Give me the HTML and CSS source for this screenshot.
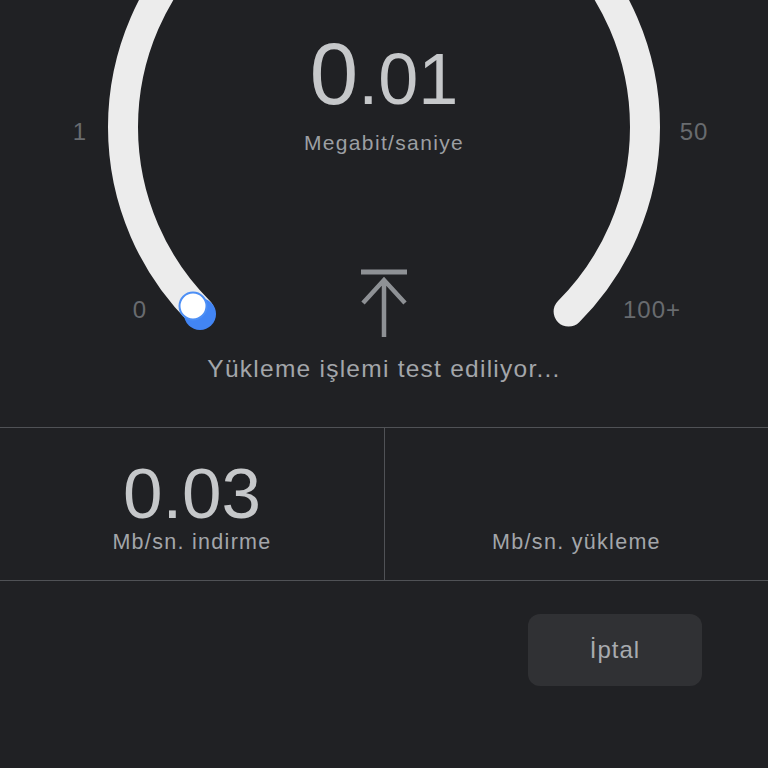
FILE: index.html
```html
<!DOCTYPE html>
<html lang="tr">
<head>
<meta charset="utf-8">
<title>Hız testi</title>
<link rel="stylesheet" href="styles.css">
</head>
<body>
<main class="screen">
  <section class="top">
    <div class="dial">
      <svg class="arc" width="768" height="345" viewBox="0 0 768 345" aria-hidden="true">
        <path d="M 199.4 311.6 A 261 261 0 1 1 568.6 311.6" fill="none" stroke="#ececec" stroke-width="30" stroke-linecap="round"/>
        <circle cx="200" cy="314" r="16" fill="#4285f4"/>
        <circle cx="193" cy="306" r="13.5" fill="#ffffff" stroke="#4d8ff5" stroke-width="2"/>
      </svg>
      <span class="tick tick-1">1</span>
      <span class="tick tick-50">50</span>
      <span class="tick tick-0">0</span>
      <span class="tick tick-100">100+</span>
      <div class="readout"><span class="int">0</span><span class="frac">.01</span></div>
      <div class="unit">Megabit/saniye</div>
      <svg class="upload" width="50" height="72" viewBox="0 0 50 72" aria-hidden="true">
        <path d="M2 6 H48" stroke="#8e9195" stroke-width="5" fill="none"/>
        <path d="M25 71 V14 M4 37 L25 14 L46 37" stroke="#8e9195" stroke-width="4.5" fill="none" stroke-linejoin="miter"/>
      </svg>
    </div>
    <p class="status">Yükleme işlemi test ediliyor...</p>
  </section>
  <section class="stats">
    <div class="cell">
      <div class="value">0.03</div>
      <div class="label">Mb/sn. indirme</div>
    </div>
    <div class="cell">
      <div class="value"></div>
      <div class="label">Mb/sn. yükleme</div>
    </div>
  </section>
  <div class="actions">
    <button class="cancel" type="button">İptal</button>
  </div>
</main>
</body>
</html>
```
FILE: styles.css
```css
html, body {
  margin: 0;
  padding: 0;
  background: #202124;
}
body {
  font-family: "Liberation Sans", Arial, sans-serif;
  width: 768px;
  height: 768px;
  overflow: hidden;
}
.screen {
  display: flex;
  flex-direction: column;
}
.top {
  height: 427px;
  display: flex;
  flex-direction: column;
  align-items: center;
}
.dial {
  position: relative;
  width: 768px;
  height: 340px;
  padding-top: 30px;
  box-sizing: border-box;
  display: flex;
  flex-direction: column;
  align-items: center;
}
.arc {
  position: absolute;
  left: 0;
  top: 0;
}
.tick {
  position: absolute;
  font-size: 24px;
  line-height: 24px;
  letter-spacing: 1px;
  color: #686b6f;
  transform: translateX(-50%);
}
.tick-1 { left: 80px; top: 120px; }
.tick-50 { left: 694px; top: 120px; }
.tick-0 { left: 140px; top: 298px; }
.tick-100 { left: 652px; top: 298px; }
.readout {
  position: relative;
  height: 88px;
  line-height: 88px;
  font-size: 87px;
  color: #c6c8ca;
  white-space: nowrap;
}
.readout .frac {
  font-size: 72px;
}
.unit {
  position: relative;
  margin-top: 13px;
  font-size: 21px;
  line-height: 24px;
  letter-spacing: 1.35px;
  color: #9c9fa3;
}
.upload {
  position: relative;
  margin-top: 111px;
  display: block;
}
.status {
  margin: 14px 0 0;
  font-size: 24.5px;
  line-height: 30px;
  letter-spacing: 1.25px;
  color: #a3a6aa;
}
.stats {
  display: grid;
  grid-template-columns: 1fr 1fr;
  border-top: 1px solid #505256;
  border-bottom: 1px solid #505256;
  height: 154px;
  box-sizing: border-box;
}
.cell {
  padding-top: 33px;
  display: flex;
  flex-direction: column;
  align-items: center;
}
.cell + .cell {
  border-left: 1px solid #505256;
}
.value {
  height: 66px;
  font-size: 71px;
  line-height: 66px;
  color: #c6c8ca;
}
.label {
  margin-top: 3px;
  font-size: 21.5px;
  line-height: 24px;
  letter-spacing: 1.3px;
  color: #a3a6aa;
}
.actions {
  display: flex;
  justify-content: flex-end;
  padding: 33px 66px 0 0;
}
.cancel {
  width: 174px;
  height: 72px;
  border: 0;
  border-radius: 12px;
  background: #303134;
  color: #a8abaf;
  font-family: "Liberation Sans", Arial, sans-serif;
  font-size: 24px;
  letter-spacing: 1px;
  padding: 0;
}
```
